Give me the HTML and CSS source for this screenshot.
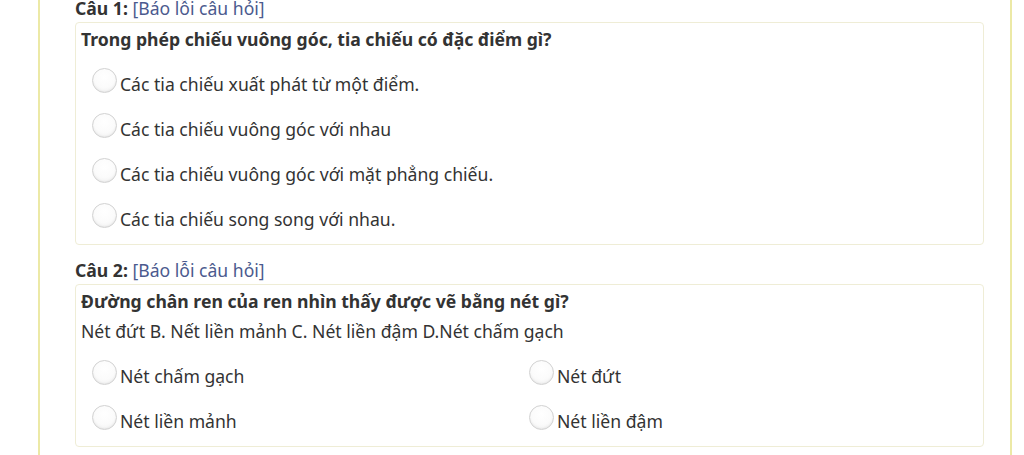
FILE: index.html
```html
<!DOCTYPE html>
<html lang="vi">
<head>
<meta charset="utf-8">
<link rel="stylesheet" href="styles.css">
</head>
<body>
<div class="page">
  <div class="quiz">
    <div class="q">
      <div class="q-head"><b>Câu 1:</b> <a class="report" href="#">[Báo lỗi câu hỏi]</a></div>
      <div class="q-box">
        <div class="q-text"><b>Trong phép chiếu vuông góc, tia chiếu có đặc điểm gì?</b></div>
        <div class="opts">
          <label class="opt"><span class="radio"></span>Các tia chiếu xuất phát từ một điểm.</label>
          <label class="opt"><span class="radio"></span>Các tia chiếu vuông góc với nhau</label>
          <label class="opt"><span class="radio"></span>Các tia chiếu vuông góc với mặt phẳng chiếu.</label>
          <label class="opt"><span class="radio"></span>Các tia chiếu song song với nhau.</label>
        </div>
      </div>
    </div>
    <div class="q">
      <div class="q-head"><b>Câu 2:</b> <a class="report" href="#">[Báo lỗi câu hỏi]</a></div>
      <div class="q-box">
        <div class="q-text"><b>Đường chân ren của ren nhìn thấy được vẽ bằng nét gì?</b>
          <p class="q-sub">Nét đứt B. Nết liền mảnh C. Nét liền đậm D.Nét chấm gạch</p>
        </div>
        <div class="opts two">
          <label class="opt"><span class="radio"></span>Nét chấm gạch</label>
          <label class="opt"><span class="radio"></span>Nét đứt</label>
          <label class="opt"><span class="radio"></span>Nét liền mảnh</label>
          <label class="opt"><span class="radio"></span>Nét liền đậm</label>
        </div>
      </div>
    </div>
  </div>
</div>
</body>
</html>
```
FILE: styles.css
```css
html, body {
  margin: 0;
  padding: 0;
  background: #fff;
  height: 455px;
  overflow: hidden;
}
body {
  font-family: "Noto Sans", "Open Sans", sans-serif;
  font-size: 17.6px;
  color: #333;
}
.page {
  margin-left: 38px;
  width: 970px;
  height: 470px;
  border-left: 2px solid #ece9a6;
  border-right: 2px solid #ece9a6;
  border-top: 1px solid #e6e6e6;
  margin-top: -1px;
}
.quiz {
  padding-left: 35px;
  width: 909px;
  margin-top: -3px;
}
.q + .q {
  margin-top: 14px;
}
.q-head {
  line-height: 22px;
  margin-bottom: 3px;
}
.q-head b {
  font-weight: 700;
}
.report {
  color: #4b5a8e;
  text-decoration: none;
}
.q-box {
  border: 1px solid #efedd6;
  border-radius: 4px;
  padding: 4px 5px 3px;
}
.q-text {
  line-height: 24px;
}
.q-sub {
  margin: 6px 0 0;
}
.opts {
  margin-top: 10px;
}
.opts.two {
  display: grid;
  grid-template-columns: 437px 1fr;
}
.opt {
  display: flex;
  align-items: center;
  height: 45px;
  padding-left: 11px;
}
.radio {
  width: 23px;
  height: 23px;
  border-radius: 50%;
  border: 1px solid #d2d2d2;
  background: radial-gradient(circle at 50% 35%, #ffffff 0%, #fbfbfb 55%, #ececec 100%);
  box-shadow: inset 0 -1px 2px rgba(0,0,0,0.05);
  margin-top: -6px;
  margin-right: 3px;
  flex: none;
}
```
